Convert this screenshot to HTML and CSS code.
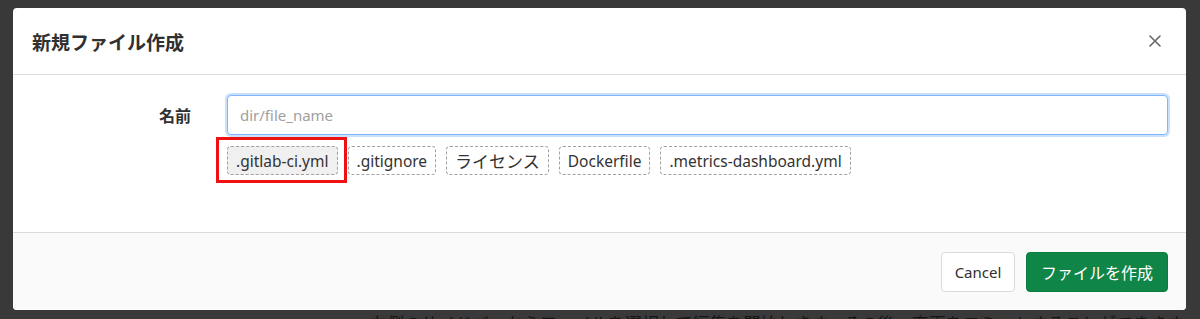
FILE: index.html
```html
<!DOCTYPE html>
<html lang="ja">
<head>
    <meta charset="UTF-8">
    <meta name="viewport" content="width=device-width, initial-scale=1.0">
    <title>新規ファイル作成</title>
    <link rel="stylesheet" href="styles.css">
</head>
<body>

<div class="modal">
    <div class="modal-header">
        <h2>新規ファイル作成</h2>
        <button class="close-button" aria-label="Close">
            <svg width="12" height="12" viewBox="0 0 12 12"><path d="M1 1L11 11M11 1L1 11" stroke="#666" stroke-width="1.6" stroke-linecap="round"/></svg>
        </button>
    </div>
    <div class="modal-body">
        <div class="form-row">
            <label for="fileName">名前</label>
            <div class="field">
                <input type="text" id="fileName" placeholder="dir/file_name">
                <div class="templates">
                    <button class="template selected">.gitlab-ci.yml</button>
                    <button class="template">.gitignore</button>
                    <button class="template jp">ライセンス</button>
                    <button class="template">Dockerfile</button>
                    <button class="template">.metrics-dashboard.yml</button>
                    <div class="mark"></div>
                </div>
            </div>
        </div>
    </div>
    <div class="modal-footer">
        <button class="btn-cancel">Cancel</button>
        <button class="btn-create">ファイルを作成</button>
    </div>
</div>

<p class="behind">右側のサイドバーからファイルを選択して編集を開始します。その後、変更をコミットすることができます。</p>

</body>
</html>
```

FILE: styles.css
```css
body {
    margin: 0;
    background-color: #393939;
    font-family: "Noto Sans", "Noto Sans CJK JP", sans-serif;
    color: #303030;
    height: 319px;
    overflow: hidden;
}
.modal {
    margin: 8px 14px 0 13px;
    background-color: #fff;
    border-radius: 4px;
    overflow: hidden;
}
.modal-header {
    height: 66px;
    display: flex;
    align-items: center;
    justify-content: space-between;
    padding: 0 24px 0 19px;
    border-bottom: 1px solid #dbdbdb;
}
.modal-header h2 {
    margin: 0;
    font-family: "Noto Sans CJK JP", sans-serif;
    font-size: 19px;
    font-weight: bold;
    color: #303030;
}
.close-button {
    background: none;
    border: none;
    padding: 0;
    width: 14px;
    height: 14px;
    display: flex;
    align-items: center;
    justify-content: center;
    cursor: pointer;
}
.modal-body {
    height: 157px;
    box-sizing: border-box;
    padding: 20px 18px 0 0;
}
.form-row {
    display: flex;
    align-items: flex-start;
}
.form-row label {
    width: 178px;
    text-align: right;
    padding-top: 8px;
    font-family: "Noto Sans CJK JP", sans-serif;
    font-weight: bold;
    font-size: 16px;
    color: #303030;
}
.field {
    flex: 1;
    margin-left: 36px;
}
.field input {
    width: 100%;
    box-sizing: border-box;
    height: 40px;
    padding: 0 12px;
    font-family: "Noto Sans", sans-serif;
    font-size: 15px;
    border: 1px solid #7fb6ff;
    border-radius: 4px;
    box-shadow: 0 0 0 2px #c9e0ff;
    outline: none;
}
.field input::placeholder {
    color: #a0a0a0;
}
.templates {
    position: relative;
    display: flex;
    gap: 10px;
    margin-top: 11px;
}
.template {
    height: 29px;
    padding: 0 8px;
    font-family: "Noto Sans", "Noto Sans CJK JP", sans-serif;
    font-size: 15.5px;
    color: #333;
    background-color: #fff;
    border: 1px dashed #a0a0a0;
    border-radius: 4px;
}
.template.jp {
    font-family: "Noto Sans CJK JP", sans-serif;
    font-size: 17px;
}
.template.selected {
    background-color: #f0f0f0;
}
.mark {
    position: absolute;
    left: -11px;
    top: -9px;
    width: 125px;
    height: 40px;
    border: 3px solid #ee1111;
}
.modal-footer {
    height: 78px;
    box-sizing: border-box;
    display: flex;
    justify-content: flex-end;
    align-items: center;
    gap: 11px;
    padding: 0 18px;
    background-color: #fafafa;
    border-top: 1px solid #dbdbdb;
}
.modal-footer button {
    height: 40px;
    border-radius: 4px;
    cursor: pointer;
}
.btn-cancel {
    width: 74px;
    background-color: #fff;
    color: #303030;
    border: 1px solid #dbdbdb;
    font-family: "Noto Sans", sans-serif;
    font-size: 15px;
}
.btn-create {
    width: 142px;
    background-color: #108548;
    color: #fff;
    border: 1px solid #0d7a40;
    font-family: "Noto Sans CJK JP", sans-serif;
    font-size: 16px;
}
.behind {
    margin: 0 0 0 370px;
    padding-top: 1px;
    font-family: "Noto Sans CJK JP", sans-serif;
    font-size: 17px;
    line-height: 24px;
    color: #151515;
}
```
